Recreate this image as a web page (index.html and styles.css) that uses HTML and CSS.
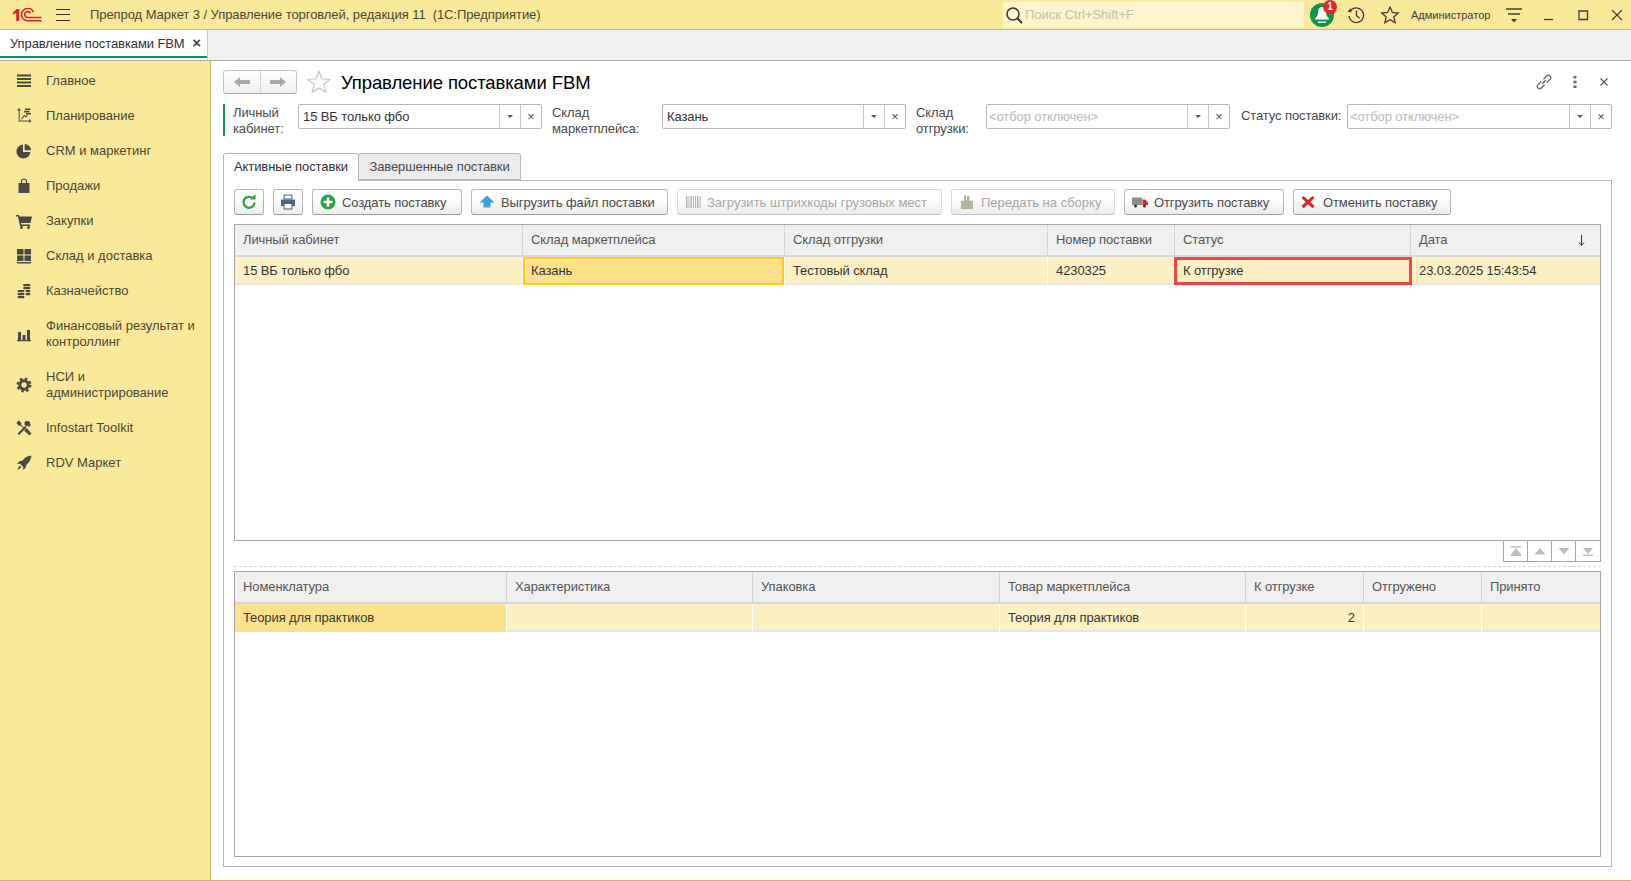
FILE: index.html
```html
<!DOCTYPE html>
<html lang="ru">

<head>
  <meta charset="UTF-8">
  <meta name="viewport" content="width=device-width, initial-scale=1.0">
  <title>Управление поставками FBM</title>
  <link rel="stylesheet" href="styles.css">
</head>

<body>

  <header class="topbar">
    <svg class="logo" viewBox="0 0 30 14" fill="none" stroke="#d8232a">
      <path d="M1 4.600 4.600 1H7.200V13H4.200V5L1 6.800z" fill="#d8232a" stroke="none" />
      <path d="M21.500 4.200A6.200 6.200 0 1 0 15 12.700H29.500" stroke-width="1.600" />
      <path d="M18.500 5.600A3 3 0 1 0 15 9.500H29.500" stroke-width="1.600" />
    </svg>
    <button class="burger"><i></i><i></i><i></i></button>
    <div class="app-title">Препрод Маркет 3 / Управление торговлей, редакция 11&nbsp; (1С:Предприятие)</div>
    <div class="search">
      <svg viewBox="0 0 18 18" width="18" height="18" fill="none" stroke="#333" stroke-width="1.500">
        <circle cx="8" cy="8" r="6" />
        <path d="M12.500 12.500 17 17" stroke-width="2" />
      </svg>
      <span>Поиск Ctrl+Shift+F</span>
    </div>
    <div class="bell">
      <svg viewBox="0 0 24 24" width="24" height="24">
        <circle cx="12" cy="12" r="12" fill="#0a9748" />
        <path d="M12 4c3 0 4 2.500 4 5 0 3 1 5 3 6.500v1H5v-1C7 14 8 12 8 9c0-2.500 1-5 4-5z" fill="#fff" />
        <path d="M8 18.500h8v1.500H8z" fill="#fff" />
      </svg>
      <span class="badge">1</span>
    </div>
    <svg class="top-icon history" viewBox="0 0 20 20" fill="none" stroke="#3c3c3c" stroke-width="1.300">
      <path d="M4.300 6A7.300 7.300 0 1 1 3 11" />
      <path d="M1.500 6.800 4.800 3.200 5.500 7.500z" fill="#3c3c3c" stroke="none" />
      <path d="M10.500 5.500v5.200l3.300 2.600" />
    </svg>
    <svg class="top-icon star-top" viewBox="0 0 20 20" fill="none" stroke="#3c3c3c" stroke-width="1.300">
      <path d="M10 2l2.400 5.400 5.800.6-4.400 3.900 1.300 5.700L10 14.700l-5.100 2.900 1.300-5.700L1.800 8l5.800-.6z" />
    </svg>
    <div class="user">Администратор</div>
    <svg class="top-icon settings" viewBox="0 0 18 18" fill="none" stroke="#3c3c3c" stroke-width="1.300">
      <path d="M1 3h16M3 8h12" />
      <path d="M6 13h6l-3 3.500z" fill="#3c3c3c" stroke="none" />
    </svg>
    <div class="window-btns">
      <svg viewBox="0 0 12 12" width="12" height="12" fill="none" stroke="#3c3c3c" stroke-width="1.300"><path d="M1 10.500h9" /></svg>
      <svg viewBox="0 0 12 12" width="12" height="12" fill="none" stroke="#3c3c3c" stroke-width="1.300"><path d="M2 2h8.500v8.500H2z" /></svg>
      <svg viewBox="0 0 12 12" width="12" height="12" fill="none" stroke="#3c3c3c" stroke-width="1.100"><path d="M1 1l10 10M11 1 1 11" /></svg>
    </div>
  </header>

  <div class="tabbar">
    <div class="open-tab">
      <span>Управление поставками FBM</span>
      <b class="tab-close">×</b>
    </div>
  </div>

  <div class="main">
    <nav class="sidebar">
      <a class="side-item">
        <svg viewBox="0 0 16 16"><path d="M1 1.500h14v2H1zM1 5h14v2H1zM1 8.500h14v2H1zM1 12h14v2H1z" /></svg>
        <span>Главное</span>
      </a>
      <a class="side-item">
        <svg viewBox="0 0 16 16">
          <path d="M3 0 5 2.500H3.600V12.500H13V11l2.500 2-2.500 2v-1.500H2.600V2.500H1z" />
          <path d="M5 11 8 7l2 1 1-1.500.8.5-1.500 2.500-2-1L5.800 11.500z" />
          <path d="M9 .5h5.500v1.600H9zM8 2.800h5.500v1.600H8zM10 5h5v1.500h-5z" />
        </svg>
        <span>Планирование</span>
      </a>
      <a class="side-item">
        <svg viewBox="0 0 16 16"><path d="M7 1.500V9h7.400A7 7 0 1 1 7 1.500z" /><path d="M8.700 1a6.500 6.500 0 0 1 6.300 6.300H8.700z" /></svg>
        <span>CRM и маркетинг</span>
      </a>
      <a class="side-item">
        <svg viewBox="0 0 16 16">
          <path d="M2.500 5h11v10h-11z" />
          <path d="M5.500 6V3.500a2.500 2.500 0 0 1 5 0V6" fill="none" stroke="#4a4a44" stroke-width="1.200" />
        </svg>
        <span>Продажи</span>
      </a>
      <a class="side-item">
        <svg viewBox="0 0 16 16">
          <path d="M0 2h3l.5 1.500H16L14.500 10H5l.3 1.500H14V13H4L2 3.500H0z" />
          <circle cx="5.500" cy="14.500" r="1.400" />
          <circle cx="12.500" cy="14.500" r="1.400" />
        </svg>
        <span>Закупки</span>
      </a>
      <a class="side-item">
        <svg viewBox="0 0 16 16"><path d="M1 1h6.500v5.500H1zM8.500 1H15v5.500H8.500zM1 7.500h6.500V13H1zM8.500 7.500H15V13H8.500zM1 14h14v1.500H1z" /></svg>
        <span>Склад и доставка</span>
      </a>
      <a class="side-item">
        <svg viewBox="0 0 16 16">
          <rect x="7" y="1" width="7.500" height="2.200" rx="1.100" />
          <rect x="7" y="4" width="7.500" height="2.200" rx="1.100" />
          <rect x="1.500" y="7" width="7" height="2.200" rx="1.100" />
          <rect x="9.500" y="7" width="5" height="2.200" rx="1.100" />
          <rect x="1.500" y="10" width="7" height="2.200" rx="1.100" />
          <rect x="9.500" y="10" width="5" height="2.200" rx="1.100" />
          <rect x="1.500" y="13" width="7" height="2.200" rx="1.100" />
        </svg>
        <span>Казначейство</span>
      </a>
      <a class="side-item">
        <svg viewBox="0 0 16 16"><path d="M2 6h3v8H2zM6.500 9h3v5h-3zM11 4h3v10h-3zM1 14h14v1.200H1z" /></svg>
        <span>Финансовый результат и контроллинг</span>
      </a>
      <a class="side-item">
        <svg viewBox="0 0 16 16">
          <circle cx="8" cy="8" r="6.300" fill="none" stroke="#4a4a44" stroke-width="2.400" stroke-dasharray="2.500 2.450" />
          <circle cx="8" cy="8" r="4.200" fill="none" stroke="#4a4a44" stroke-width="3" />
        </svg>
        <span>НСИ и администрирование</span>
      </a>
      <a class="side-item">
        <svg viewBox="0 0 16 16">
          <path d="M1.500 13.500 9 6l1.500 1.500-7.500 7.500zM8.500 2c2-1.500 4.500-1 6 .5l-1 1 1.500 1.500-2 2-1.500-1.500-1.500 1L8.500 4.500z" />
          <path d="M2.500.5 5.500 3 5 4.500l4.500 4.500 1.500-.5 4.500 5-2 2-5-4.500.5-1.500L4.500 5.500 3 6 .5 3z" />
        </svg>
        <span>Infostart Toolkit</span>
      </a>
      <a class="side-item">
        <svg viewBox="0 0 16 16">
          <path d="M15.500.5c-4 .3-7 2-9 5L3 6.500 1 9l3-.3 3.300 3.300-.3 3 2.500-2 1-3.500c3-2 4.700-5.500 5-9.500z" />
          <path d="M3.500 10.500 1 15l4.500-2.500z" />
        </svg>
        <span>RDV Маркет</span>
      </a>
    </nav>

    <section class="content">
      <div class="form-head">
        <div class="nav-group">
          <button><svg viewBox="0 0 16 12" width="16" height="12" fill="#a8a8a8"><path d="M0 6l6-5v3h10v4H6v3z" /></svg></button>
          <button><svg viewBox="0 0 16 12" width="16" height="12" fill="#a8a8a8"><path d="M16 6l-6-5v3H0v4h10v3z" /></svg></button>
        </div>
        <svg class="fav" viewBox="0 0 24 24" fill="#fff" stroke="#c4c4c4" stroke-width="1.200">
          <path d="M12 1.500l3 7.300 7.800.6-6 5.100 1.900 7.600-6.700-4.100-6.700 4.100 1.900-7.600-6-5.100 7.800-.6z" />
        </svg>
        <h1>Управление поставками FBM</h1>
        <div class="head-actions">
          <svg viewBox="0 0 18 18" width="20" height="20" fill="none" stroke="#666" stroke-width="1.200">
            <path d="M7.500 10.500l3-3M6.500 8.500 3.200 11.800a2.200 2.200 0 0 0 3 3l3.300-3.300M11.500 9.500l3.300-3.300a2.200 2.200 0 0 0-3-3L8.500 6.500" />
          </svg>
          <svg class="head-dots" viewBox="0 0 4 14" width="4" height="14" fill="#666"><path d="M.5 1h3v2.500h-3zM.5 5.700h3v2.500h-3zM.5 10.500h3V13h-3z" /></svg>
          <svg viewBox="0 0 8 8" width="8" height="8" fill="none" stroke="#555" stroke-width="1.100"><path d="M.5.500l7 7M7.500.500l-7 7" /></svg>
        </div>
      </div>

      <div class="filters">
        <div class="filter-mark"></div>
        <label class="filter-label w-cabinet">Личный кабинет:</label>
        <div class="field w-field1"><span class="field-value">15 ВБ только фбо</span><i class="field-btn caret"></i><i class="field-btn clear">×</i></div>
        <label class="filter-label w-market">Склад маркетплейса:</label>
        <div class="field w-field2"><span class="field-value">Казань</span><i class="field-btn caret"></i><i class="field-btn clear">×</i></div>
        <label class="filter-label w-ship">Склад отгрузки:</label>
        <div class="field w-field3"><span class="field-value off">&lt;отбор отключен&gt;</span><i class="field-btn caret"></i><i class="field-btn clear">×</i></div>
        <label class="filter-label w-status">Статус поставки:</label>
        <div class="field w-field4"><span class="field-value off">&lt;отбор отключен&gt;</span><i class="field-btn caret"></i><i class="field-btn clear">×</i></div>
      </div>

      <div class="page-tabs">
        <div class="page-tab active w-tab1">Активные поставки</div>
        <div class="page-tab w-tab2">Завершенные поставки</div>
      </div>

      <div class="panel">
        <div class="toolbar">
          <button class="btn btn-icon">
            <svg viewBox="0 0 16 16" width="16" height="16" fill="none" stroke="#2e9e3e" stroke-width="2.200">
              <path d="M13.500 8.500a5.500 5.500 0 1 1-1.800-4.300" />
              <path d="M9 5.500h5.500V0z" fill="#2e9e3e" stroke="none" />
            </svg>
          </button>
          <button class="btn btn-icon">
            <svg viewBox="0 0 16 16" width="16" height="16">
              <path d="M4 1h8v4H4z" fill="#fff" stroke="#44566e" />
              <path d="M1 5.500h14V12H1z" fill="#44698f" />
              <path d="M4 9.500h8V15H4z" fill="#fff" stroke="#44566e" />
            </svg>
          </button>
          <button class="btn w-create">
            <svg viewBox="0 0 16 16" width="16" height="16">
              <circle cx="8" cy="8" r="7.500" fill="#2aa343" />
              <path d="M6.700 3.500h2.600v3.200h3.200v2.600H9.300v3.200H6.700V9.300H3.500V6.700h3.200z" fill="#fff" />
            </svg>
            Создать поставку
          </button>
          <button class="btn w-upload">
            <svg viewBox="0 0 16 16" width="16" height="16"><path d="M8 1.500l7.500 7H11.500v5h-7v-5H.5z" fill="#3d9ee0" /></svg>
            Выгрузить файл поставки
          </button>
          <button class="btn disabled w-barcode">
            <svg viewBox="0 0 16 16" width="16" height="16" fill="#b4b4b4"><path d="M1 2h1.500v12H1zM3.500 2h1v12h-1zM5.500 2h1.500v12H5.500zM8 2h1v12H8zM10 2h1v12h-1zM12 2h1.500v12H12zM14.500 2h1v12h-1z" /></svg>
            Загрузить штрихкоды грузовых мест
          </button>
          <button class="btn disabled w-pass">
            <svg viewBox="0 0 16 16" width="16" height="16">
              <path d="M2 7l6-1 6 1v8H2z" fill="#b8b49c" />
              <path d="M5 1.500h2v5H5zM8 2h2.500v4.500H8z" fill="#a8b0a8" />
            </svg>
            Передать на сборку
          </button>
          <button class="btn w-ship-btn">
            <svg viewBox="0 0 16 12" width="16" height="12">
              <path d="M0 1.500h10V9H0z" fill="#8c8c8c" />
              <path d="M10.500 3.500H13l3 3V9h-5.500z" fill="#d8281e" />
              <circle cx="3.500" cy="10" r="1.500" fill="#333" />
              <circle cx="12.500" cy="10" r="1.500" fill="#333" />
            </svg>
            Отгрузить поставку
          </button>
          <button class="btn w-cancel">
            <svg viewBox="0 0 14 14" width="14" height="14"><path d="M2.500 1 7 5l4.500-4L13.500 3 9.300 7l4.200 4-2 2.300L7 9.200 2.500 13.300.5 11l4.200-4L.5 3z" fill="#e3211f" /></svg>
            Отменить поставку
          </button>
        </div>

        <div class="grid-table table-top">
          <div class="tr th cols-top">
            <div class="td">Личный кабинет</div>
            <div class="td">Склад маркетплейса</div>
            <div class="td">Склад отгрузки</div>
            <div class="td">Номер поставки</div>
            <div class="td">Статус</div>
            <div class="td sort">Дата
              <svg viewBox="0 0 7 11" width="7" height="11" fill="none" stroke="#333"><path d="M3.500 0v10M1 7.500l2.500 3 2.500-3" /></svg>
            </div>
          </div>
          <div class="tr tb cols-top">
            <div class="td">15 ВБ только фбо</div>
            <div class="td focused">Казань</div>
            <div class="td">Тестовый склад</div>
            <div class="td">4230325</div>
            <div class="td marked">К отгрузке</div>
            <div class="td">23.03.2025 15:43:54</div>
          </div>
        </div>

        <div class="table-nav">
          <div class="nav-cell"><svg viewBox="0 0 14 10" width="14" height="10" fill="#bdbdbd"><path d="M2 0h10v1.500H2zM7 2l5 6.500H2zM2 8.500h10V10H2z" /></svg></div>
          <div class="nav-cell"><svg viewBox="0 0 14 10" width="14" height="10" fill="#bdbdbd"><path d="M7 2l5.500 6.500h-11z" /></svg></div>
          <div class="nav-cell"><svg viewBox="0 0 14 10" width="14" height="10" fill="#bdbdbd"><path d="M7 8.500 12.500 2h-11z" /></svg></div>
          <div class="nav-cell"><svg viewBox="0 0 14 10" width="14" height="10" fill="#bdbdbd"><path d="M2 2h10L7 8zM2 8.500h10V10H2z" /></svg></div>
        </div>

        <div class="splitter"></div>

        <div class="grid-table table-bottom">
          <div class="tr th cols-bottom">
            <div class="td">Номенклатура</div>
            <div class="td">Характеристика</div>
            <div class="td">Упаковка</div>
            <div class="td">Товар маркетплейса</div>
            <div class="td">К отгрузке</div>
            <div class="td">Отгружено</div>
            <div class="td">Принято</div>
          </div>
          <div class="tr tb cols-bottom">
            <div class="td current">Теория для практиков</div>
            <div class="td"></div>
            <div class="td"></div>
            <div class="td">Теория для практиков</div>
            <div class="td num">2</div>
            <div class="td"></div>
            <div class="td"></div>
          </div>
        </div>
      </div>
    </section>
  </div>

</body>

</html>
```
FILE: styles.css
```css
/* базовые стили */
html,
body {
  margin: 0;
  padding: 0;
  height: 100%;
  overflow: hidden;
}

body {
  display: flex;
  flex-direction: column;
  font-family: "Liberation Sans", Arial, sans-serif;
  font-size: 13px;
  letter-spacing: -0.1px;
  color: #333;
  background-color: #fff;
}

button {
  font-family: inherit;
  font-size: 13px;
  letter-spacing: inherit;
}

/* верхняя полоса */
.topbar {
  display: flex;
  align-items: center;
  height: 29px;
  flex-shrink: 0;
  background-color: #fbe99b;
  border-bottom: 1px solid #c9b866;
}

.logo {
  width: 30px;
  height: 14px;
  margin-left: 12px;
}

.burger {
  display: flex;
  flex-direction: column;
  justify-content: space-between;
  width: 14px;
  height: 12px;
  margin-left: 14px;
  padding: 0;
  border: none;
  background: none;
}

.burger i {
  display: block;
  height: 1px;
  background-color: #333;
}

.app-title {
  width: 913px;
  margin-left: 20px;
  color: #4a4636;
  letter-spacing: -0.07px;
}

.search {
  display: flex;
  align-items: center;
  gap: 2px;
  width: 301px;
  height: 26px;
  padding-left: 2px;
  box-sizing: border-box;
  background-color: #fdf5cc;
  border-radius: 2px;
  color: #c4c0a8;
  letter-spacing: 0;
}

.bell {
  display: flex;
  width: 24px;
  height: 24px;
  margin-left: 6px;
  position: relative;
}

.badge {
  position: absolute;
  top: -3px;
  right: -3px;
  width: 14px;
  height: 14px;
  border-radius: 50%;
  background-color: #e5262b;
  color: #fff;
  font-size: 10px;
  font-weight: bold;
  line-height: 14px;
  text-align: center;
}

.top-icon {
  flex-shrink: 0;
}

.history {
  width: 20px;
  height: 20px;
  margin-left: 12px;
}

.star-top {
  width: 20px;
  height: 20px;
  margin-left: 14px;
}

.user {
  width: 92px;
  margin-left: 11px;
  font-size: 11px;
  color: #3c3c3c;
  letter-spacing: 0;
}

.settings {
  width: 18px;
  height: 18px;
  margin-left: 2px;
}

.window-btns {
  display: flex;
  gap: 22px;
  margin-left: 20px;
}

/* полоса вкладок */
.tabbar {
  display: flex;
  height: 30px;
  flex-shrink: 0;
  background-color: #f0f0f0;
  border-bottom: 1px solid #a9a9a9;
  box-sizing: content-box;
}

.open-tab {
  display: flex;
  align-items: center;
  justify-content: space-between;
  width: 208px;
  height: 30px;
  padding: 0 6px 4px 10px;
  box-sizing: border-box;
  background-color: #fff;
  border-right: 1px solid #c8c8c8;
  box-shadow: inset 0 -2px 0 #fff, inset 0 -4px 0 #0a9748;
}

.tab-close {
  font-size: 15px;
  line-height: 14px;
  color: #444;
}

/* основная часть */
.main {
  display: flex;
  flex: 1;
  min-height: 0;
  border-bottom: 1px solid #c9b866;
}

.sidebar {
  width: 210px;
  flex-shrink: 0;
  padding-top: 2px;
  box-sizing: content-box;
  background-color: #fbe99b;
  border-right: 1px solid #c9b866;
  letter-spacing: 0;
}

.side-item {
  display: flex;
  align-items: center;
  padding: 9.5px 10px 9.5px 16px;
  line-height: 16px;
  color: #4a4636;
}

.side-item svg {
  width: 16px;
  height: 16px;
  flex-shrink: 0;
  margin-right: 14px;
  fill: #4a4a44;
}

/* форма */
.content {
  flex: 1;
  min-width: 0;
  padding: 9px 17px 0 12px;
  display: flex;
  flex-direction: column;
}

.form-head {
  display: flex;
  align-items: center;
  height: 24px;
}

.nav-group {
  display: flex;
  width: 74px;
  height: 24px;
  box-sizing: border-box;
  border: 1px solid #c4c4c4;
  border-bottom-color: #a8a8a8;
  border-radius: 3px;
  background: linear-gradient(#fff, #f0f0f0);
}

.nav-group button {
  flex: 1;
  display: flex;
  align-items: center;
  justify-content: center;
  padding: 0;
  border: none;
  background: none;
}

.nav-group button + button {
  border-left: 1px solid #d4d4d4;
}

.fav {
  width: 24px;
  height: 24px;
  margin-left: 10px;
}

h1 {
  margin: 0 0 0 10px;
  padding-top: 2px;
  font-size: 18.5px;
  font-weight: normal;
  color: #000;
}

.head-actions {
  display: flex;
  align-items: center;
  gap: 19px;
  margin-left: auto;
  padding-right: 6px;
}

.head-dots {
  margin-right: 4px;
}

.filters {
  display: flex;
  align-items: flex-start;
  height: 32px;
  margin-top: 10px;
}

.filter-mark {
  width: 2px;
  height: 32px;
  background-color: #0a9748;
  flex-shrink: 0;
}

.filter-label {
  flex-shrink: 0;
  padding-top: 1px;
  line-height: 16px;
  color: #4a4a4a;
}

.w-cabinet { width: 57px; margin-left: 8px; }
.w-market { width: 100px; margin-left: 10px; }
.w-ship { width: 60px; margin-left: 10px; }
.w-status { width: 101px; margin-left: 11px; padding-top: 4px; white-space: nowrap; }

.field {
  display: flex;
  align-items: stretch;
  height: 25px;
  box-sizing: border-box;
  flex-shrink: 0;
  border: 1px solid #b5b5b5;
  border-radius: 2px;
}

.w-field1 { width: 244px; margin-left: 8px; }
.w-field2 { width: 244px; margin-left: 10px; }
.w-field3 { width: 244px; margin-left: 10px; }
.w-field4 { width: 265px; margin-left: 5px; }

.field-value {
  flex: 1;
  padding-left: 4px;
  line-height: 23px;
}

.field-value.off {
  padding-left: 2px;
  color: #b9b9b9;
}

.field-btn {
  display: flex;
  align-items: center;
  justify-content: center;
  width: 20px;
  border-left: 1px solid #c8c8c8;
  font-style: normal;
  font-size: 13px;
  color: #555;
}

.caret::before {
  content: "";
  border-left: 3.500px solid transparent;
  border-right: 3.500px solid transparent;
  border-top: 3.500px solid #555;
}

/* вкладки страниц */
.page-tabs {
  display: flex;
  margin-top: 17px;
  height: 27px;
}

.page-tab {
  height: 27px;
  box-sizing: border-box;
  line-height: 26px;
  text-align: center;
  border: 1px solid #b5b5b5;
  border-radius: 3px 3px 0 0;
  background-color: #ececec;
  color: #4a4a4a;
}

.page-tab.active {
  background-color: #fff;
  border-bottom-color: #fff;
  color: #333;
  height: 28px;
  z-index: 1;
}

.w-tab1 { width: 136px; }
.w-tab2 { width: 163px; margin-left: -1px; }

.panel {
  flex: 1;
  width: 1389px;
  min-height: 0;
  margin-bottom: 13px;
  padding: 8px 10px 9px;
  box-sizing: border-box;
  border: 1px solid #b5b5b5;
  display: flex;
  flex-direction: column;
}

/* кнопки */
.toolbar {
  display: flex;
  gap: 9px;
  height: 26px;
  flex-shrink: 0;
  margin-bottom: 9px;
}

.btn {
  display: flex;
  align-items: center;
  justify-content: flex-start;
  gap: 6px;
  height: 26px;
  padding: 0 0 0 7px;
  box-sizing: border-box;
  flex-shrink: 0;
  white-space: nowrap;
  border: 1px solid #b5b5b5;
  border-bottom-color: #9c9c9c;
  border-radius: 3px;
  background: linear-gradient(#fff 30%, #ececec);
  color: #4a4a4a;
}

.btn-icon {
  width: 30px;
  justify-content: center;
  padding: 0;
}

.btn.disabled {
  border-color: #d9d9d9;
  border-bottom-color: #c4c4c4;
  color: #a6a6a6;
  letter-spacing: 0;
}

.w-create { width: 150px; }
.w-upload { width: 197px; }
.w-barcode { width: 265px; }
.w-pass { width: 164px; }
.w-ship-btn { width: 160px; }
.w-cancel { width: 158px; gap: 8px; }

/* таблицы */
.grid-table {
  box-sizing: border-box;
  border: 1px solid #a5a5a5;
  flex-shrink: 0;
}

.table-top {
  height: 317px;
}

.table-bottom {
  height: 286px;
}

.tr {
  display: grid;
}

.cols-top {
  grid-template-columns: 288px 262px 263px 127px 236px 189px;
}

.cols-bottom {
  grid-template-columns: 272px 246px 247px 246px 118px 118px 118px;
}

.td {
  padding: 0 8px;
  box-sizing: border-box;
  border-right: 1px solid #fff;
  white-space: nowrap;
}

.td:last-child {
  border-right: none;
}

.th {
  height: 32px;
  background-color: #f0f0f0;
  border-bottom: 2px solid #d8d8d8;
  box-sizing: border-box;
  color: #555;
}

.th .td {
  line-height: 30px;
  border-right: 1px solid #d4d4d4;
}

.th .td:last-child {
  border-right: none;
}

.tb {
  height: 28px;
  background-color: #fdf1c4;
  border-bottom: 2px solid #e6e6e6;
  box-sizing: border-box;
  line-height: 28px;
  color: #333;
}

.sort {
  display: flex;
  align-items: center;
  justify-content: space-between;
  padding-right: 15px;
}

.focused {
  background-color: #fee28b;
  box-shadow: inset 0 0 0 2px #ffc926;
}

.marked {
  line-height: 22px;
  border: 3px solid #f4444a;
  padding-left: 6px;
  height: 28px;
  margin-left: -1px;
  margin-right: -1px;
}

.current {
  background-color: #fee28b;
}

.num {
  text-align: right;
}

.table-nav {
  display: flex;
  align-self: flex-end;
  height: 22px;
  margin-top: -1px;
  flex-shrink: 0;
  box-sizing: border-box;
  border: 1px solid #a5a5a5;
}

.nav-cell {
  display: flex;
  align-items: center;
  justify-content: center;
  width: 24px;
  box-sizing: border-box;
  border-right: 1px solid #a5a5a5;
}

.nav-cell:last-child {
  border-right: none;
}

.splitter {
  height: 0;
  margin: 4px 0;
  flex-shrink: 0;
  border-top: 1px dashed #d4d4d4;
}
```
